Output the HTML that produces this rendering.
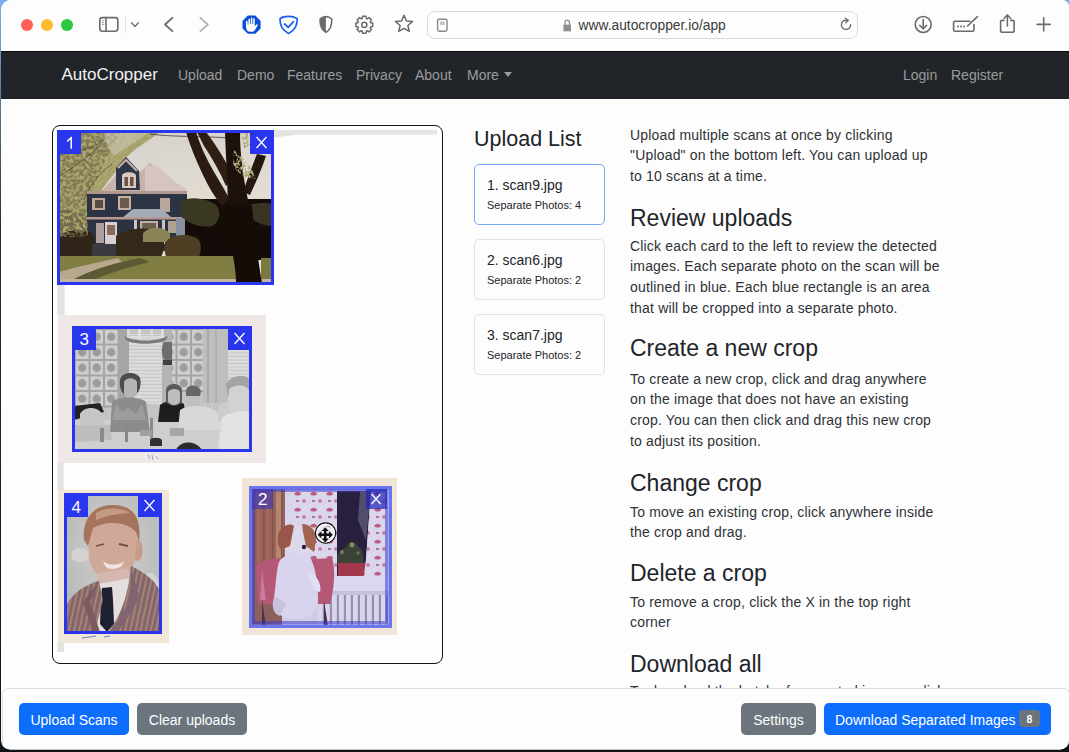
<!DOCTYPE html>
<html><head><meta charset="utf-8">
<style>
*{box-sizing:border-box;margin:0;padding:0}
html,body{width:1069px;height:752px;overflow:hidden;background:linear-gradient(180deg,#7cb0f4 0%,#6a90b4 8%,#587890 14%,#22303a 30%,#1c2226 60%,#0e1418 100%)}
body{font-family:"Liberation Sans",sans-serif;position:relative}
.a{position:absolute}
#win{position:absolute;left:0;top:0;width:1069px;height:752px;background:#fdfdfd;overflow:hidden;clip-path:inset(0px 0px 2.5px 1px round 10px 7px 9px 9px)}
#chrome{position:absolute;left:0;top:0;width:1069px;height:51px;background:#fdfdfd}
.tl{position:absolute;top:19px;width:12px;height:12px;border-radius:50%}
#nav{position:absolute;left:0;top:51px;width:1069px;height:48px;background:#212529;border-top:1px solid #0b0c0e}
.nl{position:absolute;top:15px;font-size:14px;color:#9a9c9e;white-space:nowrap}
.p{position:absolute;left:630px;font-size:14px;line-height:20.9px;color:#2e3236;white-space:nowrap;letter-spacing:0.18px}
.h{position:absolute;left:630px;font-size:23px;line-height:28px;color:#212529;white-space:nowrap}
.card{position:absolute;left:474px;width:131px;height:61px;border:1px solid #dfe1e3;border-radius:5px;background:#fdfdfd}
.card .t{position:absolute;left:12px;top:12px;font-size:14px;color:#212529;white-space:nowrap}
.card .s{position:absolute;left:12px;top:34px;font-size:11px;color:#212529;white-space:nowrap}
.btn{position:absolute;top:702.5px;height:32.5px;border-radius:5px;color:#fff;font-size:14px;line-height:35px;text-align:center;white-space:nowrap}
</style></head><body>
<div id="win">
 <div id="chrome">
  <div class="tl" style="left:21px;background:#fe5f57"></div>
  <div class="tl" style="left:41px;background:#febc2e"></div>
  <div class="tl" style="left:61px;background:#28c840"></div>
  <svg class="a" style="left:0;top:0" width="1069" height="51" viewBox="0 0 1069 51">
<g fill="none" stroke="#6b6b6b" stroke-width="1.6" stroke-linecap="round" stroke-linejoin="round">
 <rect x="99.8" y="17.6" width="18" height="13.6" rx="2.6"/>
 <line x1="106" y1="17.8" x2="106" y2="31"/>
 <line x1="102.3" y1="20.6" x2="103.8" y2="20.6" stroke-width="0.8" stroke="#8a8a8a"/>
 <line x1="102.3" y1="22.6" x2="103.8" y2="22.6" stroke-width="0.8" stroke="#8a8a8a"/>
 <line x1="102.3" y1="24.6" x2="103.8" y2="24.6" stroke-width="0.8" stroke="#8a8a8a"/>
 <polyline points="131.6,22.8 135,26.4 138.4,22.8" stroke-width="1.5" stroke="#777"/>
 <polyline points="172.4,17.8 165,24.5 172.4,31.2" stroke-width="1.8"/>
 <polyline points="200.4,17.8 207.8,24.5 200.4,31.2" stroke-width="1.8" stroke="#b4b4b4"/>
</g>
<line x1="125.5" y1="16.3" x2="125.5" y2="33.5" stroke="#e2e2e2" stroke-width="1"/>
<polygon points="247.8,15.6 255.3,15.6 260.6,20.9 260.6,28.5 255.3,33.8 247.8,33.8 242.5,28.5 242.5,20.9" fill="#0a4dd8"/>
<path d="M248 31.5 C246.5 30 246 28 246 25.5 L246 21.5 C246 20.6 247.6 20.6 247.6 21.5 L247.6 24.5 L248.4 24.5 L248.4 19.3 C248.4 18.4 250 18.4 250 19.3 L250 24 L250.8 24 L250.8 18.2 C250.8 17.3 252.4 17.3 252.4 18.2 L252.4 24 L253.2 24 L253.2 19 C253.2 18.1 254.8 18.1 254.8 19 L254.8 26.2 L256.4 24.6 C257 24 258 24.6 257.6 25.4 L255 30 C254.3 31.2 253.2 31.8 251.8 31.8 Z" fill="#fff"/>
<path d="M280 18.6 C284 15.6 293 15.6 297.2 18.6 C297.4 25 294.6 30.6 288.6 33.4 C282.6 30.6 279.8 25 280 18.6 Z" fill="none" stroke="#1a5ff0" stroke-width="1.7" stroke-linejoin="round"/>
<polyline points="284.6,24 288.2,27.4 293.4,21.6" fill="none" stroke="#1a5ff0" stroke-width="1.8" stroke-linecap="round" stroke-linejoin="round"/>
<path d="M320 19 C322 17.4 324 16.8 325.9 16.6 C327.8 16.8 329.8 17.4 331.8 19 C332 25.5 330 30 325.9 32.4 C321.8 30 319.8 25.5 320 19 Z" fill="none" stroke="#6b6b6b" stroke-width="1.5" stroke-linejoin="round"/>
<path d="M320 19 C322 17.4 324 16.8 325.9 16.6 L325.9 32.4 C321.8 30 319.8 25.5 320 19 Z" fill="#6b6b6b"/>
<path d="M370.56 22.72 L372.73 23.09 L372.73 26.51 L370.56 26.88 L370.20 27.76 L371.47 29.55 L369.05 31.97 L367.26 30.70 L366.38 31.06 L366.01 33.23 L362.59 33.23 L362.22 31.06 L361.34 30.70 L359.55 31.97 L357.13 29.55 L358.40 27.76 L358.04 26.88 L355.87 26.51 L355.87 23.09 L358.04 22.72 L358.40 21.84 L357.13 20.05 L359.55 17.63 L361.34 18.90 L362.22 18.54 L362.59 16.37 L366.01 16.37 L366.38 18.54 L367.26 18.90 L369.05 17.63 L371.47 20.05 L370.20 21.84 Z" fill="none" stroke="#6b6b6b" stroke-width="1.5" stroke-linejoin="round"/><circle cx="364.3" cy="24.8" r="2.6" fill="none" stroke="#6b6b6b" stroke-width="1.5"/><polygon points="404.00,15.20 406.41,20.88 412.56,21.42 407.90,25.47 409.29,31.48 404.00,28.30 398.71,31.48 400.10,25.47 395.44,21.42 401.59,20.88" fill="none" stroke="#6b6b6b" stroke-width="1.5" stroke-linejoin="round"/><g fill="none" stroke="#6b6b6b" stroke-width="1.6" stroke-linecap="round" stroke-linejoin="round">
<circle cx="923.2" cy="24.5" r="8"/>
<line x1="923.2" y1="19.6" x2="923.2" y2="28.6"/>
<polyline points="919.8,25.4 923.2,28.8 926.6,25.4"/>
<path d="M970 21.3 L955 21.3 C954 21.3 953.6 21.7 953.6 22.7 L953.6 30 C953.6 31 954 31.3 955 31.3 L972.6 31.3 C973.6 31.3 974 31 974 30 L974 24.5"/>
<line x1="967.6" y1="26" x2="977.4" y2="16.6"/>
<polyline points="1004,20.4 1001.5,20.4 1000.6,21.2 1000.6,31.4 1001.5,32.2 1013.2,32.2 1014.1,31.4 1014.1,21.2 1013.2,20.4 1010.7,20.4"/>
<line x1="1007.4" y1="15.2" x2="1007.4" y2="26"/>
<polyline points="1004.2,18.2 1007.4,15 1010.6,18.2"/>
<line x1="1037.2" y1="24.4" x2="1050.2" y2="24.4"/>
<line x1="1043.7" y1="17.9" x2="1043.7" y2="30.9"/>
</g>
<g fill="#6b6b6b"><circle cx="958" cy="26.4" r="1"/><circle cx="961" cy="26.4" r="1"/><circle cx="964" cy="26.4" r="1"/></g>
<g><rect x="437.6" y="19.2" width="9.4" height="12" rx="1.6" fill="none" stroke="#8a8a8a" stroke-width="1.4"/><rect x="440" y="21.4" width="4.6" height="3.6" fill="#c4c4c4"/></g>
<path d="M563.4 24.6 L571 24.6 L571 31.3 L563.4 31.3 Z" fill="#8e8e8e"/>
<path d="M565 24.8 L565 22.5 C565 19.4 569.4 19.4 569.4 22.5 L569.4 24.8" fill="none" stroke="#8e8e8e" stroke-width="1.3"/>
<path d="M850.6 24.8 A4.6 4.6 0 1 1 847.2 20.4" fill="none" stroke="#6e6e6e" stroke-width="1.4" stroke-linecap="round"/>
<polyline points="845.4,18.2 848.2,20.4 845.8,22.8" fill="none" stroke="#6e6e6e" stroke-width="1.4" stroke-linecap="round" stroke-linejoin="round"/>
</svg>
  <div class="a" style="left:427px;top:11px;width:431px;height:28px;border:1px solid #d9d9d9;border-radius:8px;background:transparent"></div>
  <div class="a" style="left:578.5px;top:18px;font-size:13.8px;color:#3a3a3a;white-space:nowrap">www.autocropper.io/app</div>
 </div>
 <div id="nav">
  <div class="a" style="left:61.5px;top:13px;font-size:17px;color:#f1f1f1;white-space:nowrap">AutoCropper</div>
  <div class="nl" style="left:178px">Upload</div>
  <div class="nl" style="left:237px">Demo</div>
  <div class="nl" style="left:287px">Features</div>
  <div class="nl" style="left:356px">Privacy</div>
  <div class="nl" style="left:415px">About</div>
  <div class="nl" style="left:467px">More</div>
  <div class="a" style="left:503.5px;top:20px;width:0;height:0;border-left:4px solid transparent;border-right:4px solid transparent;border-top:5px solid #9a9c9e"></div>
  <div class="nl" style="left:903px">Login</div>
  <div class="nl" style="left:951px">Register</div>
 </div>

 <!-- canvas -->
 <div class="a" style="left:52px;top:124.5px;width:390.5px;height:539px;border:1.4px solid #111;border-radius:8px"></div>
 <div id="photos"><svg class="a" style="left:0;top:0" width="1069" height="752" viewBox="0 0 1069 752">
<path d="M274 130 L437 130 L437 134.5 L300 134.5 L274 137.5 Z" fill="#e6e4e2"/>
<rect x="57.5" y="285" width="7" height="30" fill="#e4e2e0"/>
<rect x="57.5" y="463" width="6" height="27" fill="#e4e2e0"/>
<rect x="57.5" y="643" width="6.5" height="9" fill="#e4e2e0"/>
<rect x="58" y="315" width="208" height="148" fill="#efe8e6"/>
<rect x="58" y="490" width="111" height="153" fill="#f1e7d8"/>
<rect x="242" y="478" width="155" height="157" fill="#f0e5d6"/>
<path d="M148 455 L150 459 M152 455 L153 460 M156 456 L158 459" stroke="#8aa0c8" stroke-width="1"/>
<path d="M82 638 L96 636 M104 637 L110 636" stroke="#7088b8" stroke-width="1.2"/>
</svg>
<svg class="a" style="left:0;top:0" width="1069" height="752" viewBox="0 0 1069 752">
<defs>
<clipPath id="c1"><rect x="59" y="132" width="213" height="151"/></clipPath>
<linearGradient id="sky1" x1="0" y1="0" x2="0.3" y2="1"><stop offset="0" stop-color="#d4d0cc"/><stop offset="0.6" stop-color="#e2dcd2"/><stop offset="1" stop-color="#ece2d0"/></linearGradient>
<filter id="speck" x="0" y="0" width="100%" height="100%"><feTurbulence type="fractalNoise" baseFrequency="0.35" numOctaves="2" seed="3"/><feColorMatrix values="0 0 0 0 0.42  0 0 0 0 0.40  0 0 0 0 0.18  5 0 0 0 -2.1"/><feComposite in2="SourceGraphic" operator="in"/></filter>
<filter id="speck2" x="0" y="0" width="100%" height="100%"><feTurbulence type="fractalNoise" baseFrequency="0.3" numOctaves="2" seed="7"/><feColorMatrix values="0 0 0 0 0.16  0 0 0 0 0.14  0 0 0 0 0.07  5 0 0 0 -2.0"/><feComposite in2="SourceGraphic" operator="in"/></filter>
</defs>
<g clip-path="url(#c1)">
 <rect x="59" y="132" width="213" height="151" fill="url(#sky1)"/>
 <!-- left tree foliage speckled -->
 <path d="M59 132 L160 132 C150 140 130 150 120 165 C110 180 100 190 95 200 L88 232 L59 240 Z" fill="#9a9454" opacity="0.85"/>
 <path d="M59 132 L160 132 C150 140 130 150 120 165 C110 180 100 190 95 200 L88 232 L59 240 Z" fill="#000" filter="url(#speck)"/>
 <path d="M59 132 L120 132 C110 150 100 170 92 190 L86 232 L59 240 Z" fill="#000" filter="url(#speck2)" opacity="0.7"/>
 <path d="M104 132 L150 132 C135 142 122 150 114 156 C108 148 104 140 104 132 Z" fill="#d4d0c4" opacity="0.5"/>
 <path d="M60 176 C72 168 84 160 100 146 M66 150 C78 152 90 150 104 140 M84 200 C90 186 96 176 112 164" stroke="#4a3c28" stroke-width="0.9" fill="none" opacity="0.8"/>
 <path d="M150 134 C170 137 200 136 230 138" stroke="#3a3a3a" stroke-width="0.8" fill="none"/>
 <!-- roof -->
 <path d="M92 200 L112 180 L126 158 L140 172 L150 163 L168 178 L187 190 L187 200 Z" fill="#c8b2ac"/>
 <path d="M116 168 L126 157 L139 171 L140 190 L116 190 Z" fill="#2e3646"/>
 <path d="M118 168 L126 160 L137 171" stroke="#c8b0a8" stroke-width="2" fill="none"/>
 <path d="M122 188 L122 176 C122 171 136 171 136 176 L136 188 Z" fill="#d8c8c0"/>
 <rect x="124.5" y="177" width="3.5" height="9" fill="#6a5048"/><rect x="130" y="177" width="3.5" height="9" fill="#6a5048"/>
 <path d="M145 166 L158 166 L175 182 L187 190 L187 196 L145 196 Z" fill="#d6c4c0"/>
 <!-- house body -->
 <rect x="87" y="193" width="100" height="58" fill="#2c3444"/>
 <rect x="87" y="191" width="100" height="3" fill="#b0988c"/>
 <rect x="92" y="198" width="13" height="12" fill="#c0a898"/>
 <rect x="95" y="200" width="8" height="8" fill="#5a4a40"/>
 <rect x="118" y="196" width="13" height="14" fill="#c6b0a4"/>
 <rect x="120" y="198" width="9" height="10" fill="#6a5a50"/>
 <rect x="160" y="198" width="10" height="14" fill="#b8a89c"/>
 <path d="M122 218 L133 209 L162 209 L172 218 Z" fill="#a4acb8"/>
 <rect x="87" y="217" width="95" height="2.5" fill="#b89890"/>
 <rect x="96" y="223" width="8" height="20" fill="#b0a0a0"/>
 <rect x="105" y="222" width="12" height="23" fill="#d8d0d0"/>
 <rect x="107" y="225" width="8" height="10" fill="#8a6a5a"/>
 <rect x="134" y="220" width="3" height="24" fill="#d0c4c0"/>
 <rect x="140" y="221" width="18" height="12" fill="#c0b0a0"/>
 <rect x="142" y="223" width="14" height="8" fill="#6a6050"/>
 <rect x="162" y="220" width="3" height="24" fill="#d0c4c0"/>
 <rect x="168" y="221" width="8" height="12" fill="#b0a090"/>
 <rect x="176" y="218" width="10" height="28" fill="#8890a0"/>
 <!-- dark right area -->
 <rect x="185" y="199" width="87" height="61" fill="#140c08"/>
 <path d="M180 201 C192 196 205 198 215 204 C222 210 220 222 212 226 C200 228 190 224 183 218 Z" fill="#3a3820"/>
 <path d="M246 206 C255 202 268 203 272 204 L272 226 C262 226 250 220 246 212 Z" fill="#3a3422"/>
 <!-- bushes -->
 <path d="M59 238 C62 230 80 228 92 233 C97 240 96 252 92 258 L59 258 Z" fill="#2f2417"/>
 <path d="M59 212 C65 208 80 210 88 220 L88 236 L59 238 Z" fill="#000" filter="url(#speck2)"/>
 <path d="M116 236 C125 228 150 226 160 232 C166 240 165 252 160 258 L116 258 Z" fill="#34281a"/>
 <path d="M143 233 C150 226 162 226 170 233 L170 242 L143 242 Z" fill="#8a8458"/>
 <path d="M165 244 C168 234 190 232 199 240 C203 248 200 260 193 264 L170 264 C165 258 164 250 165 244 Z" fill="#4e3e24"/>
 <rect x="92" y="244" width="24" height="12" fill="#3a3a40"/>
 <!-- lawn -->
 <path d="M59 256 L236 256 L236 283 L59 283 Z" fill="#807e42"/>
 <path d="M261 258 L272 258 L272 283 L261 283 Z" fill="#7a7a3e"/>
 <path d="M59 272 C80 266 100 262 118 258 L122 262 C100 268 82 276 70 283 L59 283 Z" fill="#b8a88e"/>
 <path d="M72 280 C95 268 120 262 140 258 L150 262 C125 268 100 276 88 283 Z" fill="#5c5a34"/>
 <rect x="59" y="279" width="213" height="4" fill="#c2b4a0"/>
 <!-- tree -->
 <path d="M186 132 L196 132 C200 145 206 158 214 172 C220 182 226 192 230 200 L222 206 C214 196 208 186 203 175 C196 160 190 146 186 132 Z" fill="#2a1a12"/>
 <path d="M197 132 L206 132 C214 142 222 155 228 166 L232 180 L226 186 C220 172 212 158 204 146 Z" fill="#2e1e14"/>
 <path d="M225 132 L240 132 C240 150 242 170 246 190 L250 210 L228 212 C228 190 226 160 225 132 Z" fill="#1c110b"/>
 <path d="M257 154 L266 156 C262 168 256 182 250 195 L243 192 C248 178 252 166 257 154 Z" fill="#241710"/>
 <path d="M218 205 L252 205 C254 230 258 260 262 283 L236 283 C236 262 228 230 218 205 Z" fill="#150c08"/>
 <path d="M234 150 C240 156 252 166 256 178 C250 182 238 174 233 166 Z" fill="#000" filter="url(#speck)"/>
 <path d="M240 132 L262 132 C258 140 250 146 244 148 Z" fill="#000" filter="url(#speck)"/>
</g>
</svg>

<svg class="a" style="left:0;top:0" width="1069" height="752" viewBox="0 0 1069 752"><defs><clipPath id="c3"><rect x="74" y="328" width="175" height="122"/></clipPath><pattern id="tile" x="75" y="329" width="14.5" height="15.5" patternUnits="userSpaceOnUse"><rect width="14.5" height="15.5" fill="#a4a4a4"/><rect x="1" y="1" width="12.5" height="13.5" fill="#cfcfcf"/><circle cx="7.2" cy="7.7" r="4.2" fill="#9c9c9c"/></pattern><pattern id="blind" x="0" y="0" width="4" height="3.5" patternUnits="userSpaceOnUse"><rect width="4" height="3.5" fill="#dcdcdc"/><rect y="2.5" width="4" height="1" fill="#c4c4c4"/></pattern></defs><g clip-path="url(#c3)">
<rect x="74" y="328" width="175" height="122" fill="#c4c4c4"/>
<rect x="74" y="328" width="46" height="80" fill="url(#tile)"/>
<rect x="172" y="328" width="31" height="64" fill="url(#tile)"/>
<rect x="119" y="328" width="10" height="80" fill="#a6a6a6"/>
<rect x="129" y="334" width="33" height="70" fill="url(#blind)"/>
<rect x="162" y="328" width="10" height="75" fill="#b4b4b4"/>
<path d="M124 336 C134 342 156 342 168 336 L166 340 C156 345 134 345 126 340 Z" fill="#7a7a7a"/>
<rect x="127" y="329" width="3" height="9" fill="#d8d8d8"/><rect x="138" y="329" width="3" height="10" fill="#e0e0e0"/><rect x="150" y="329" width="3" height="10" fill="#d8d8d8"/><rect x="161" y="329" width="3" height="9" fill="#dcdcdc"/>
<path d="M164 342 C160 350 162 358 166 362 L172 360 L172 342 Z" fill="#6e6e6e"/>
<rect x="163" y="360" width="9" height="5" fill="#404040"/>
<rect x="203" y="328" width="25" height="75" fill="#bebebe"/>
<rect x="207" y="328" width="2" height="75" fill="#a8a8a8"/>
<rect x="215" y="328" width="2" height="75" fill="#b0b0b0"/>
<rect x="228" y="350" width="21" height="55" fill="url(#blind)"/>
<!-- table -->
<rect x="74" y="420" width="175" height="30" fill="#cfcfcf"/>
<!-- kid left -->
<path d="M74 406 L100 403 L104 412 L88 416 L74 420 Z" fill="#222"/>
<path d="M80 414 C84 406 98 406 102 414 C106 422 104 432 96 436 L80 436 Z" fill="#c6c6c6"/>
<path d="M74 425 L110 425 L112 440 L74 442 Z" fill="#bdbdbd"/>
<!-- woman left -->
<path d="M120 380 C121 372 136 370 140 378 C142 386 139 396 130 397 C122 396 119 388 120 380 Z" fill="#4c4c4c"/>
<path d="M124 382 C126 377 135 377 137 382 L137 394 C133 400 127 400 124 394 Z" fill="#b4b4b4"/>
<path d="M112 402 C118 396 140 396 146 402 L150 432 L110 432 Z" fill="#8c8c8c"/>
<path d="M116 404 L122 412 L128 408 L136 414 L142 404 L146 420 L112 420 Z" fill="#a8a8a8" opacity="0.6"/>
<!-- woman middle dark top -->
<path d="M160 405 C166 400 178 400 184 404 L186 422 L158 422 Z" fill="#1e1e1e"/>
<path d="M166 390 C167 382 181 382 182 390 L182 402 C178 407 170 407 166 402 Z" fill="#5a5a5a"/>
<path d="M168 392 C170 388 179 388 180 392 L180 402 C176 406 172 406 168 402 Z" fill="#bcbcbc"/>
<!-- boy -->
<path d="M186 392 C188 386 198 386 200 392 L200 408 C196 412 190 412 186 408 Z" fill="#c0c0c0"/>
<path d="M186 390 C188 384 198 384 201 391 L200 396 L186 396 Z" fill="#666"/>
<path d="M180 410 C188 404 210 404 220 414 L222 430 L178 430 Z" fill="#d8d8d8"/>
<!-- girl right -->
<path d="M218 408 C220 400 234 400 236 408 L236 420 C232 424 222 424 218 420 Z" fill="#cdcdcd"/>
<!-- woman right -->
<path d="M226 384 C230 374 249 374 249 380 L249 396 L228 396 Z" fill="#a4a4a4"/>
<path d="M229 390 C232 384 246 384 249 390 L249 412 C244 416 234 416 229 410 Z" fill="#d2d2d2"/>
<path d="M222 418 C230 410 249 410 249 412 L249 450 L218 450 Z" fill="#e2e2e2"/>
<!-- table clutter -->
<rect x="100" y="428" width="4" height="14" fill="#8a8a8a"/>
<rect x="125" y="424" width="3" height="18" fill="#888"/>
<rect x="150" y="418" width="3" height="22" fill="#8c8c8c"/>
<rect x="140" y="430" width="12" height="6" fill="#a0a0a0"/>
<rect x="170" y="428" width="14" height="8" fill="#a6a6a6"/>
<path d="M150 440 C152 437 160 437 162 440 L162 446 L150 446 Z" fill="#303030"/>
<path d="M176 450 C180 440 196 440 202 450 Z" fill="#2c2c2c"/>
</g></svg>
<svg class="a" style="left:0;top:0" width="1069" height="752" viewBox="0 0 1069 752"><defs><clipPath id="c4"><rect x="67" y="495" width="93" height="137"/></clipPath>
<pattern id="stripe" x="0" y="0" width="5" height="8" patternUnits="userSpaceOnUse" patternTransform="rotate(12)"><rect width="5" height="8" fill="#8e6c6c"/><rect x="3" width="1.2" height="8" fill="#b08c7c"/><rect x="0.5" width="0.8" height="8" fill="#6c5c6c"/></pattern>
<radialGradient id="bg4" cx="0.5" cy="0.4" r="0.7"><stop offset="0" stop-color="#cfcfcd"/><stop offset="1" stop-color="#b4b6b6"/></radialGradient></defs>
<g clip-path="url(#c4)">
<rect x="67" y="495" width="93" height="137" fill="url(#bg4)"/>
<ellipse cx="80" cy="555" rx="9" ry="7" fill="#d6d2d2"/>
<ellipse cx="150" cy="585" rx="9" ry="12" fill="#d2d2d2"/>
<path d="M135 540 C141 538 144 546 142 556 C140 562 135 562 133 558 Z" fill="#c89a8a"/>
<path d="M88 534 C87 520 96 510 112 509 C128 509 138 520 137 538 L135 560 C133 572 124 579 112 579 C99 579 91 570 89 558 Z" fill="#d0a898"/>
<path d="M84 540 C82 520 92 505 113 505 C132 505 142 516 139 542 L136 532 C127 522 108 520 93 528 L88 546 Z" fill="#a6745c"/>
<path d="M96 513 C104 507 122 507 130 513 C122 513 108 515 96 520 Z" fill="#c49a80"/>
<path d="M96 546 L104 544 M119 544 L128 546" stroke="#705048" stroke-width="1.8"/>
<path d="M103 561 C109 566 118 566 124 561 L122 566 C116 570 108 570 105 566 Z" fill="#f2e4e4"/>
<path d="M98 573 L128 568 L132 588 L112 598 L96 588 Z" fill="#d4b8b0"/>
<path d="M98 584 L131 578 L134 632 L93 632 Z" fill="#e4dede"/>
<path d="M102 588 L112 587 L113 600 L114 624 L107 632 L100 624 L101 600 Z" fill="#1d2030"/>
<path d="M67 605 C72 592 88 584 99 581 L103 600 L95 632 L67 632 Z" fill="url(#stripe)"/>
<path d="M131 566 C142 571 156 580 160 592 L160 632 L108 632 C118 620 128 600 131 566 Z" fill="url(#stripe)"/>
<path d="M99 581 L90 602 L100 632 L93 632 L83 602 Z" fill="#7a5c60"/>
<path d="M131 568 L140 598 L118 632 L111 632 L130 600 Z" fill="#806470"/>
</g></svg>

<svg class="a" style="left:0;top:0" width="1069" height="752" viewBox="0 0 1069 752"><defs><clipPath id="c2"><rect x="252" y="489" width="138" height="136"/></clipPath>
<pattern id="curt" x="292" y="489" width="16" height="16" patternUnits="userSpaceOnUse"><rect width="16" height="16" fill="#f0e8ec"/><path d="M2 5 C4 2 8 2 9 5 C8 7 4 7 2 5 Z" fill="#c86470"/><circle cx="12" cy="12" r="2" fill="#d8909c"/><rect x="4" y="11" width="3" height="2" fill="#c07a86"/></pattern>
<pattern id="rad" x="318" y="0" width="7" height="10" patternUnits="userSpaceOnUse"><rect width="7" height="10" fill="#ece8ee"/><rect x="4.8" width="2.2" height="10" fill="#a898a8"/></pattern>
<pattern id="wood" x="0" y="0" width="9" height="10" patternUnits="userSpaceOnUse"><rect width="9" height="10" fill="#a8684a"/><rect x="2" width="1.5" height="10" fill="#8e5640"/><rect x="6" width="1" height="10" fill="#b87a58"/></pattern>
</defs>
<g clip-path="url(#c2)">
<rect x="252" y="489" width="138" height="136" fill="#e6dce6"/>
<rect x="252" y="489" width="34" height="75" fill="url(#wood)"/>
<rect x="276" y="489" width="5" height="75" fill="#c49060"/>
<rect x="285" y="489" width="7" height="80" fill="#ece8ee"/>
<rect x="292" y="489" width="46" height="86" fill="url(#curt)"/>
<path d="M337 491 L371 491 L366 560 L363 578 L337 578 Z" fill="#2a1c2c"/>
<path d="M360 491 L371 491 L366 540 L358 520 Z" fill="#585060"/>
<path d="M337 556 C340 548 346 550 348 544 C352 538 358 546 362 550 L364 565 L337 565 Z" fill="#3e4424"/>
<circle cx="342" cy="552" r="2" fill="#7a8a48"/><circle cx="352" cy="545" r="2.4" fill="#8a9a50"/><circle cx="358" cy="553" r="1.8" fill="#6a7a40"/>
<rect x="338" y="563" width="28" height="13" fill="#b0383a"/>
<path d="M371 489 L390 489 L390 602 L360 602 L366 560 Z" fill="url(#curt)"/>
<rect x="330" y="576" width="60" height="15" fill="#eeeaf0"/>
<rect x="318" y="591" width="72" height="35" fill="url(#rad)"/>
<rect x="318" y="591" width="72" height="4" fill="#d8d0dc"/>
<rect x="252" y="564" width="30" height="62" fill="#9a6450"/>
<path d="M256 566 C262 557 286 557 300 560 L332 558 C336 570 334 590 330 604 L258 604 Z" fill="#c65c68"/>
<path d="M262 570 L266 600 L260 600 Z" fill="#e08090"/>
<path d="M262 600 L266 626 L262 626 Z M324 600 L328 626 L324 626 Z" fill="#503030"/>
<path d="M279 562 C284 553 300 552 310 557 C316 568 318 585 318 600 C318 614 306 620 292 619 C280 618 272 610 274 598 C276 585 276 572 279 562 Z" fill="#ece6ee"/>
<path d="M308 572 C316 573 322 584 320 592 C316 592 310 586 308 572 Z" fill="#f6f2f6"/>
<path d="M275 596 C271 602 272 614 280 616 L286 604 Z" fill="#dad2dc"/>
<path d="M280 540 C278 530 287 524 296 524 C306 524 314 532 313 543 C312 550 305 553 297 553 C288 553 282 549 280 540 Z" fill="#f2eaea"/>
<path d="M279 532 C283 524 292 523 294 526 L290 546 L281 550 C277 544 277 538 279 532 Z" fill="#a85a38"/>
<path d="M302 524 C310 524 316 530 316 540 L314 552 L306 546 L303 532 Z" fill="#b0683e"/>
<circle cx="304" cy="547" r="2.2" fill="#2a2020"/>
</g>
<rect x="252" y="489" width="138" height="136" fill="#2a3ee8" opacity="0.1"/>
</svg>

<svg class="a" style="left:0;top:0" width="1069" height="752" viewBox="0 0 1069 752">
<g fill="none" stroke="#2a36ee" stroke-width="3">
<rect x="58.5" y="131.5" width="214" height="152"/>
<rect x="73.5" y="327.5" width="177" height="123"/>
<rect x="65.5" y="494.5" width="95" height="138"/>
</g>
<g fill="#2a36ee">
<rect x="57" y="130" width="24" height="24"/><rect x="250" y="130" width="24" height="24"/>
<rect x="72" y="326" width="24" height="24"/><rect x="228" y="326" width="24" height="24"/>
<rect x="64" y="493" width="24" height="24"/><rect x="138" y="493" width="24" height="24"/>
</g>
<rect x="250.75" y="487.75" width="139.5" height="138.5" fill="none" stroke="#6270f0" stroke-width="3.5" opacity="0.95"/>
<rect x="253.5" y="490.5" width="133" height="132" fill="none" stroke="#3c3cc8" stroke-width="3" opacity="0.55"/>
<rect x="252" y="489" width="21" height="20" fill="#3c34c0" opacity="0.6"/>
<rect x="366" y="489" width="21" height="20" fill="#1e22b8" opacity="0.7"/>
<g fill="#fff" style="font-family:'Liberation Sans';font-size:17px">
<text x="79.5" y="345">3</text><text x="71.5" y="512.5">4</text><text x="258" y="505">2</text>
</g>
<g stroke="#fff" stroke-width="1.3" fill="none">
<path d="M256.5 137 L266.5 148 M266.5 137 L256.5 148"/>
<path d="M234.5 333 L244.5 344 M244.5 333 L234.5 344"/>
<path d="M144.5 500 L154.5 511 M154.5 500 L144.5 511"/>
<path d="M371.5 494 L380.5 504 M380.5 494 L371.5 504"/>
</g>
<path d="M67.2 141.6 L71.2 137.4 L71.2 148.8" fill="none" stroke="#fff" stroke-width="1.5" stroke-linejoin="round"/>
<circle cx="325.6" cy="533" r="10" fill="#ffffff" fill-opacity="0.45" stroke="#111" stroke-width="1.3"/>
<circle cx="325.6" cy="533" r="8.7" fill="none" stroke="#fff" stroke-width="1.4"/>
<g fill="#111" stroke="#fff" stroke-width="0.6" paint-order="stroke">
<path d="M325.2 527.2 L328.8 531 L326.5 531 L326.5 533.5 L329 533.5 L329 531.2 L332.8 534.8 L329 538.4 L329 536.1 L326.5 536.1 L326.5 538.6 L328.8 538.6 L325.2 542.4 L321.6 538.6 L323.9 538.6 L323.9 536.1 L321.4 536.1 L321.4 538.4 L317.6 534.8 L321.4 531.2 L321.4 533.5 L323.9 533.5 L323.9 531 L321.6 531 Z"/>
</g>
</svg>
</div>

 <!-- upload list -->
 <div class="a" style="left:474px;top:127px;font-size:21.5px;color:#212529;white-space:nowrap">Upload List</div>
 <div class="card" style="top:164px;border-color:#74a8f8"><div class="t">1. scan9.jpg</div><div class="s">Separate Photos: 4</div></div>
 <div class="card" style="top:239px"><div class="t">2. scan6.jpg</div><div class="s">Separate Photos: 2</div></div>
 <div class="card" style="top:314px"><div class="t">3. scan7.jpg</div><div class="s">Separate Photos: 2</div></div>

 <!-- text column -->
 <div class="p" style="top:124.5px">Upload multiple scans at once by clicking<br>"Upload" on the bottom left. You can upload up<br>to 10 scans at a time.</div>
 <div class="h" style="top:204.0px">Review uploads</div>
 <div class="p" style="top:235.5px">Click each card to the left to review the detected<br>images. Each separate photo on the scan will be<br>outlined in blue. Each blue rectangle is an area<br>that will be cropped into a separate photo.</div>
 <div class="h" style="top:334px">Create a new crop</div>
 <div class="p" style="top:368.5px">To create a new crop, click and drag anywhere<br>on the image that does not have an existing<br>crop. You can then click and drag this new crop<br>to adjust its position.</div>
 <div class="h" style="top:469.0px">Change crop</div>
 <div class="p" style="top:501.5px">To move an existing crop, click anywhere inside<br>the crop and drag.</div>
 <div class="h" style="top:559.0px">Delete a crop</div>
 <div class="p" style="top:591.5px">To remove a crop, click the X in the top right<br>corner</div>
 <div class="h" style="top:650.0px">Download all</div>
 <div class="p" style="top:681.0px">To download the batch of separated images, click</div>

 <!-- footer -->
 <div class="a" style="left:2px;top:688px;width:1068px;height:70px;background:#fdfdfd;border:1px solid #dcdcdc;border-radius:6px"></div>
 <div class="btn" style="left:19px;width:110px;background:#0d6efd">Upload Scans</div>
 <div class="btn" style="left:137px;width:110px;background:#6c757d">Clear uploads</div>
 <div class="btn" style="left:741px;width:75px;background:#6c757d">Settings</div>
 <div class="btn" style="left:824px;width:227px;background:#0d6efd;text-align:left;padding-left:11px">Download Separated Images</div>
 <div class="a" style="left:1019px;top:710px;width:21px;height:17px;border-radius:4px;background:#6c757d;color:#fff;font-size:10.5px;font-weight:bold;line-height:18px;text-align:center">8</div>
</div>
</body></html>
